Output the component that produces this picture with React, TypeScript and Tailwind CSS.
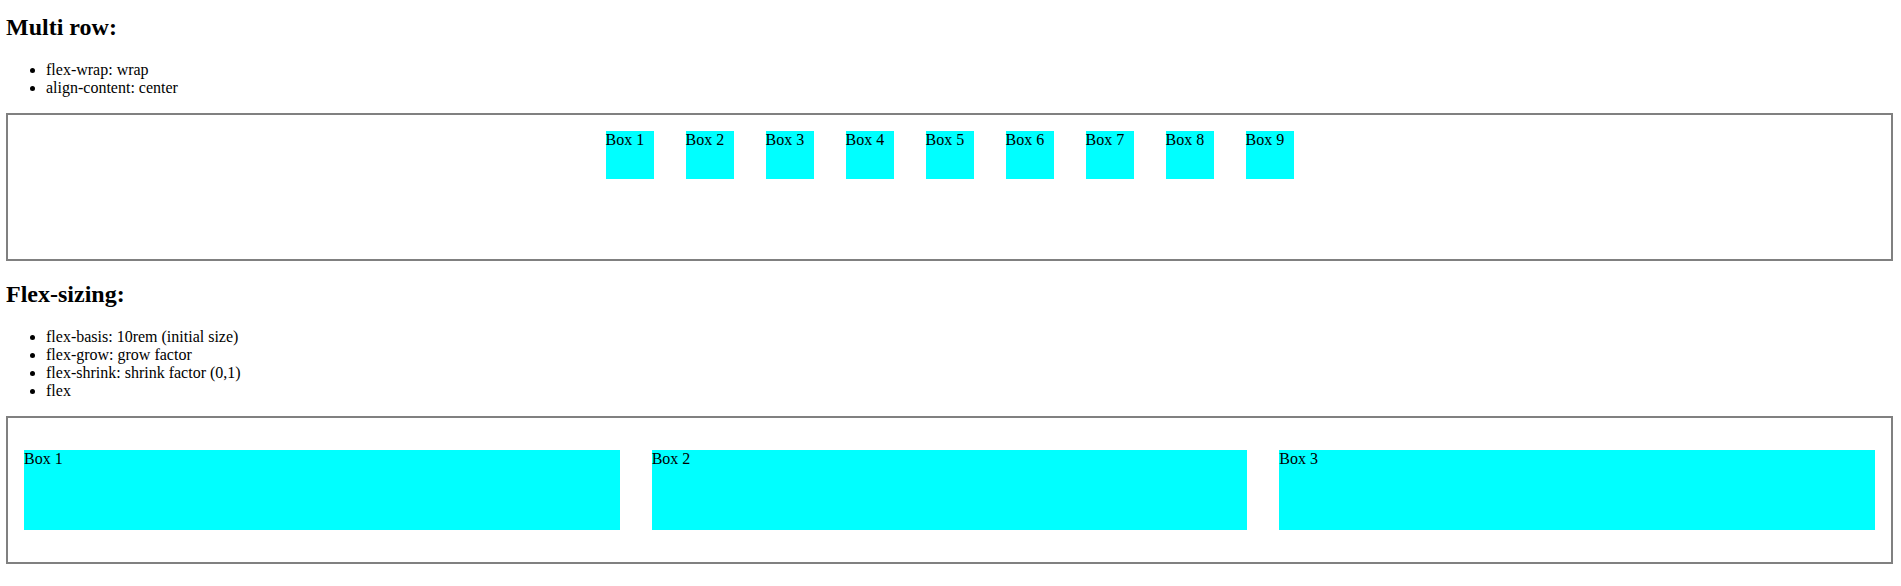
const wrapped = ['Box 1', 'Box 2', 'Box 3', 'Box 4', 'Box 5', 'Box 6', 'Box 7', 'Box 8', 'Box 9'];
const sized = ['Box 1', 'Box 2', 'Box 3'];

function Section({ title, notes }: { title: string; notes: string[] }) {
  return (
    <>
      <h2 className="mb-5 text-[24px] leading-[27px] font-bold">{title}</h2>
      <ul className="mb-4 list-disc pl-10">
        {notes.map((note) => (
          <li key={note}>{note}</li>
        ))}
      </ul>
    </>
  );
}

export default function App() {
  return (
    <main className="bg-white pt-[14px] pr-2 pl-[6px] font-['Liberation_Serif',serif] text-[16px] leading-[18px] text-black">
      <Section title="Multi row:" notes={['flex-wrap: wrap', 'align-content: center']} />
      <div className="mb-5 flex h-[148px] flex-wrap content-start justify-center border-2 border-[#808080]">
        {wrapped.map((label) => (
          <div key={label} className="m-4 size-12 bg-[cyan]">
            {label}
          </div>
        ))}
      </div>
      <Section
        title="Flex-sizing:"
        notes={['flex-basis: 10rem (initial size)', 'flex-grow: grow factor', 'flex-shrink: shrink factor (0,1)', 'flex']}
      />
      <div className="flex h-[148px] items-center border-2 border-[#808080]">
        {sized.map((label) => (
          <div key={label} className="m-4 h-20 flex-1 bg-[cyan]">
            {label}
          </div>
        ))}
      </div>
    </main>
  );
}
